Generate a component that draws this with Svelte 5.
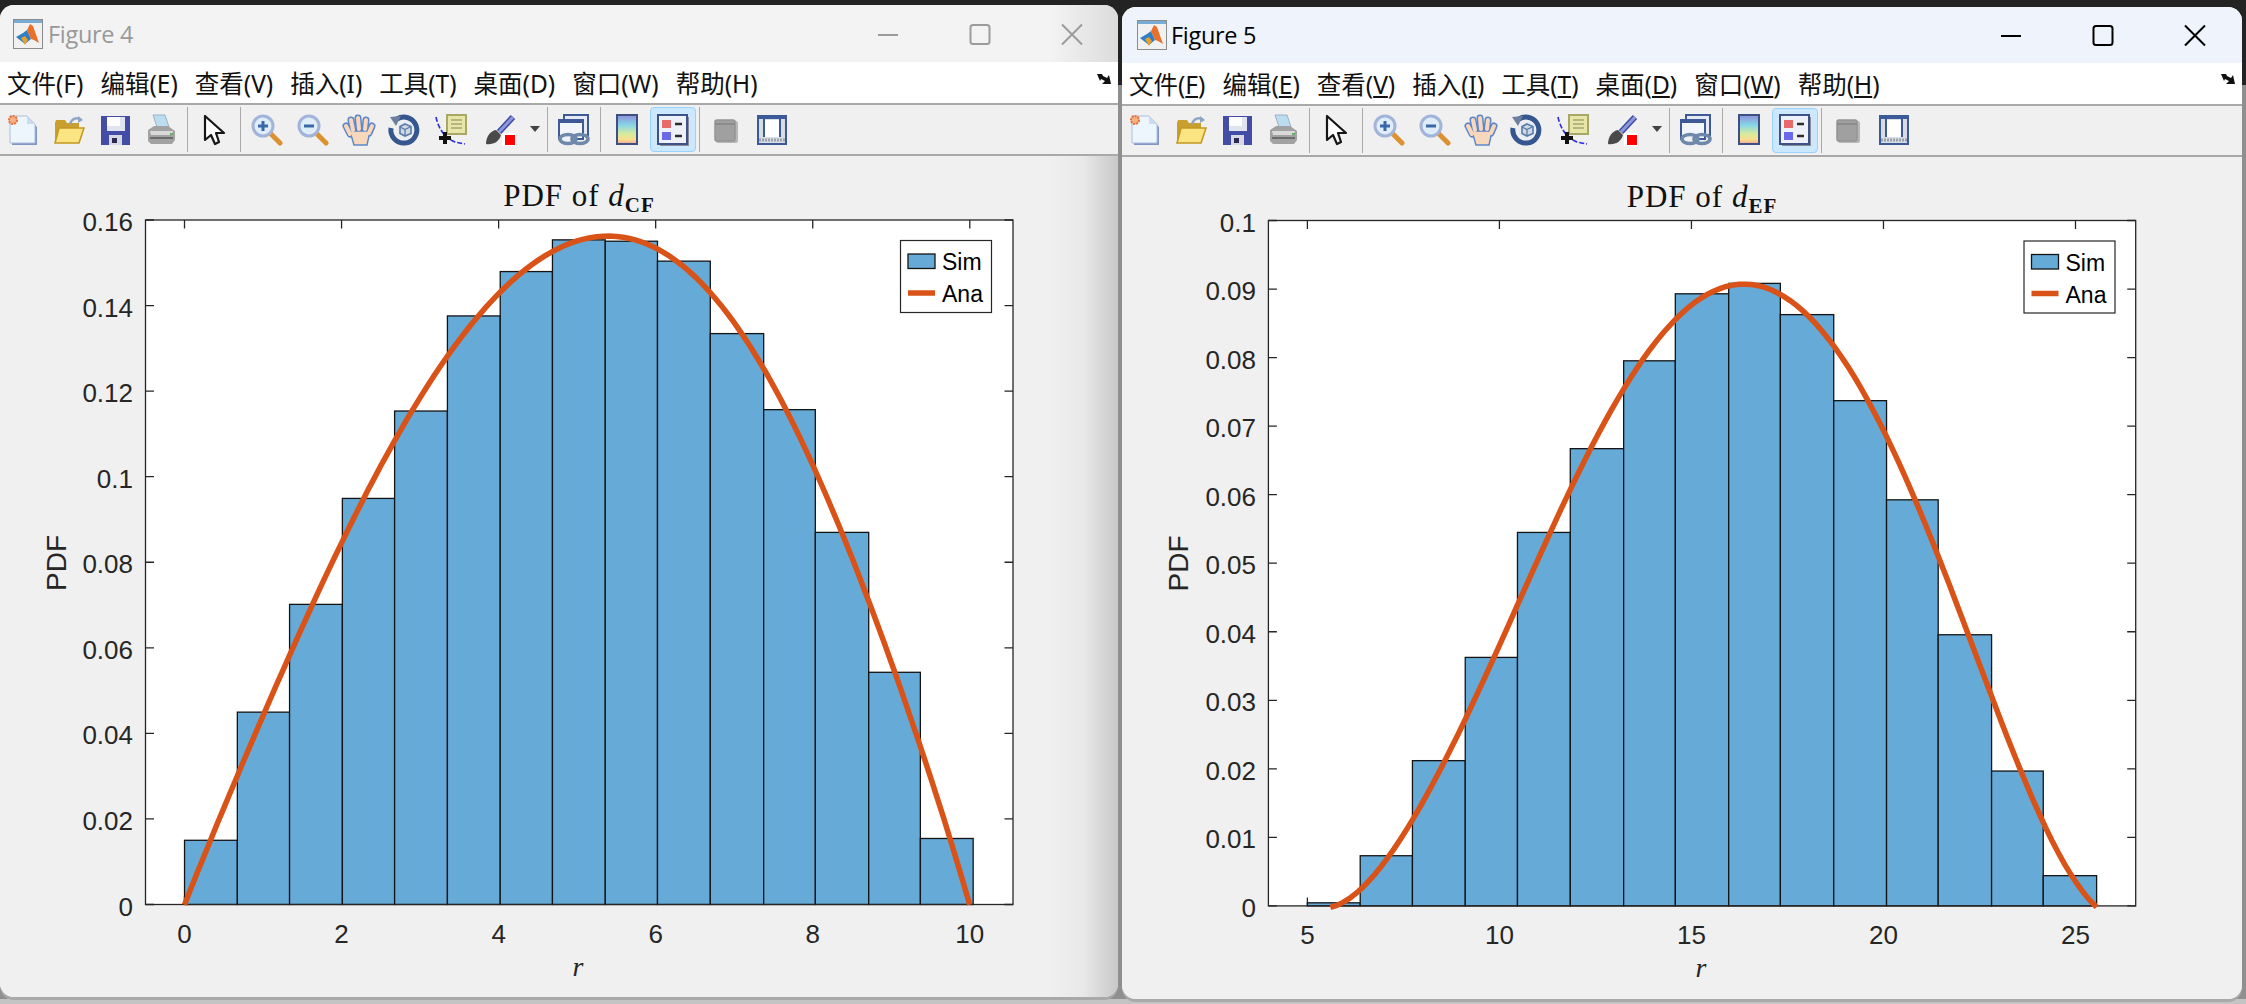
<script>
  const CURVE_A = [[95,1545],[140,1403],[187,1265],[233,1120],[278,990],[320,882],[370,745],[408,648],[461,515],[491,455],[553,335],[600,255],[645,190],[690,145],[736,105],[780,78],[830,68],[880,76],[919,95],[950,122],[1011,195],[1065,284],[1104,360],[1150,472],[1194,585],[1240,723],[1287,870],[1330,1032],[1377,1190],[1428,1399],[1463,1545]];
  const CURVE_B = [[140,1550],[165,1537],[192,1510],[230,1460],[283,1355],[340,1226],[375,1130],[428,998],[466,880],[522,722],[558,625],[595,537],[651,410],[690,325],[741,250],[790,200],[834,182],[866,176],[924,192],[965,235],[1017,310],[1075,431],[1109,510],[1160,650],[1199,770],[1250,948],[1292,1090],[1345,1249],[1382,1360],[1430,1480],[1455,1525],[1475,1547]];

  const SX = 1568 / 900, SY = 1568 / 710;

  // least-squares polynomial through the traced points, so the curve stays smooth
  function fit(points, degree) {
    const x0 = points[0][0], x1 = points[points.length - 1][0];
    const norm = (x) => (2 * (x - x0)) / (x1 - x0) - 1;
    const n = degree + 1;
    const m = Array.from({ length: n }, () => new Array(n + 1).fill(0));
    for (const [x, y] of points) {
      const t = norm(x);
      const pw = [1];
      for (let i = 1; i < n; i++) pw.push(pw[i - 1] * t);
      for (let i = 0; i < n; i++) {
        for (let j = 0; j < n; j++) m[i][j] += pw[i] * pw[j];
        m[i][n] += pw[i] * y;
      }
    }
    for (let i = 0; i < n; i++) {
      let best = i;
      for (let r = i + 1; r < n; r++) if (Math.abs(m[r][i]) > Math.abs(m[best][i])) best = r;
      [m[i], m[best]] = [m[best], m[i]];
      for (let r = 0; r < n; r++) {
        if (r === i) continue;
        const f = m[r][i] / m[i][i];
        for (let c = i; c <= n; c++) m[r][c] -= f * m[i][c];
      }
    }
    const coef = m.map((row, i) => row[n] / row[i]);
    return { x0, x1, at: (x) => coef.reduceRight((acc, c) => acc * norm(x) + c, 0) };
  }

  function curve(points, ox, degree, maxY) {
    const f = fit(points, degree);
    let d = '';
    for (let i = 0; i <= 120; i++) {
      const x = f.x0 + ((f.x1 - f.x0) * i) / 120;
      const y = Math.min(f.at(x), maxY);
      d += `${i ? 'L' : 'M'}${(ox + x / SX).toFixed(1)} ${(205 + y / SY).toFixed(1)}`;
    }
    return d;
  }

  function bars(edges, tops, ox, bottom) {
    return tops.map((t, i) => ({
      x: ox + edges[i] / SX,
      y: 205 + t / SY,
      w: (edges[i + 1] - edges[i]) / SX,
      h: bottom - (205 + t / SY)
    }));
  }

  function ticks(from, to, labels) {
    return labels.map((label, i) => ({ label, at: from + ((to - from) * i) / (labels.length - 1) }));
  }

  const plots = {
    a: {
      sub: 'CF',
      view: '0 156 1118 841',
      left: 145.5, right: 1013, top: 220, bottom: 904.5,
      cx: 579, labelX: 57, yLabelX: 133,
      xt: ticks(184.5, 969.8, ['0', '2', '4', '6', '8', '10']),
      yt: ticks(904.5, 220, ['0', '0.02', '0.04', '0.06', '0.08', '0.1', '0.12', '0.14', '0.16']),
      bars: bars([95,187,278,370,461,553,645,736,828,919,1011,1104,1194,1287,1377,1469],
                 [1403,1120,882,648,455,245,147,77,80,124,284,452,723,1032,1399], 130, 904.5),
      curve: curve(CURVE_A, 130, 8, 1548),
      legend: 900
    },
    b: {
      sub: 'EF',
      view: '1122 157 1120 841',
      left: 1268.4, right: 2135.7, top: 220, bottom: 905.4,
      cx: 1702, labelX: 1178.6, yLabelX: 1256,
      xt: ticks(1307.4, 2075.5, ['5', '10', '15', '20', '25']),
      yt: ticks(905.4, 220, ['0', '0.01', '0.02', '0.03', '0.04', '0.05', '0.06', '0.07', '0.08', '0.09', '0.1']),
      bars: bars([100,192,283,375,466,558,651,741,834,924,1017,1109,1199,1292,1382,1475],
                 [1540,1436,1226,998,722,537,343,195,172,241,431,650,948,1249,1480], 1250, 905.4),
      curve: curve(CURVE_B, 1250, 9, 1550),
      legend: 2023.5
    }
  };

  const menus = [
    ['文件', 'F'], ['编辑', 'E'], ['查看', 'V'], ['插入', 'I'],
    ['工具', 'T'], ['桌面', 'D'], ['窗口', 'W'], ['帮助', 'H']
  ];

  const tools = ['new', 'open', 'save', 'print', '|', 'cursor', '|', 'zoomin', 'zoomout', 'hand', 'rotate', 'tip', 'brush', 'v', '|', 'link', '|', 'bar', 'legend', '|', 'grey', 'frame'];
  const fingers = ['M7 20L3 12', 'M10 16L8 6', 'M16 15L15 4', 'M22 15L23 6', 'M26 19L29 12'];
</script>

{#snippet logo()}
  <svg class="logo" width="30" height="30" viewBox="0 0 30 30">
    <rect x=".5" y=".5" width="29" height="29" fill="#f1f1f1" stroke="#8b8b8b" />
    <rect x="1" y="1" width="28" height="3" fill="#79acd4" />
    <path d="M3 18l7-4 4-3 4 9-6 5z" fill="#2f7fc4" />
    <path d="M14 11l3-6 3 2 6 17-5-3-3-1z" fill="#e8702a" />
    <path d="M8 19l4-2 3 4-3 5z" fill="#e8a030" />
  </svg>
{/snippet}

{#snippet icon(name)}
  <svg class="ic" width="32" height="32" viewBox="0 0 32 32">
    {#if name === 'new'}
      <path d="M5 4h16l9 9v18H5z" fill="#8296c2" />
      <path d="M3 2h17l8 8v19H3z" fill="#eef6fd" stroke="#a9bede" />
      <path d="M20 2v8h8z" fill="#c9dcf0" />
      <circle cx="6" cy="6" r="4" fill="#f5b184" stroke="#e2703a" stroke-width="2" stroke-dasharray="2 1" />
    {:else if name === 'open'}
      <path d="M2 9l1-3h9l2 3h12v20H2z" fill="#c9a030" />
      <path d="M2 29L6 14h25l-5 15z" fill="#fbe582" stroke="#c4961f" stroke-width="1.5" />
      <path d="M17 10c2-6 7-7 11-4" fill="none" stroke="#8ea5c4" stroke-width="2.5" />
      <path d="M25 2l5 4-5 3z" fill="#8ea5c4" />
    {:else if name === 'save'}
      <rect x="2" y="2" width="29" height="29" fill="#444da6" />
      <rect x="8" y="3" width="18" height="14" fill="#dfe4ee" />
      <rect x="8" y="3" width="13" height="9" fill="#fdfdfd" />
      <rect x="10" y="21" width="13" height="10" fill="#d6d8e4" />
      <rect x="13" y="24" width="5" height="5" fill="#2a2a50" />
    {:else if name === 'print'}
      <path d="M8 1h12l4 12H12z" fill="#bcdcef" stroke="#9ab2c4" />
      <path d="M3 16l6-4h14l7 5v9l-3 4H6l-3-3z" fill="#a2a2a2" />
      <path d="M5 17h23l-1 4H6z" fill="#d9d9d9" />
      <path d="M5 24h23" stroke="#6c6c6c" stroke-width="2" />
      <rect x="25" y="19" width="3" height="2" fill="#62b262" />
    {:else if name === 'cursor'}
      <path d="M7 2v24l6-5 4 9 4-2-3-9h8z" fill="#fff" stroke="#161616" stroke-width="2.2" stroke-linejoin="round" />
    {:else if name === 'zoomin' || name === 'zoomout'}
      <path d="M20 20l9 9" stroke="#dc9232" stroke-width="5" stroke-linecap="round" />
      <circle cx="12" cy="12" r="10" fill="#dfedf8" stroke="#a3b4da" stroke-width="3" />
      <path d="M7 12h10" stroke="#3a67a8" stroke-width="3" />
      {#if name === 'zoomin'}<path d="M12 7v10" stroke="#3a67a8" stroke-width="3" />{/if}
    {:else if name === 'hand'}
      {#each fingers as f}
        <path d={f} stroke="#5e86ca" stroke-width="7" stroke-linecap="round" />
      {/each}
      <path d="M7 17h20l-3 14H11z" fill="#f8d8bc" stroke="#5e86ca" stroke-width="1.5" />
      {#each fingers as f}
        <path d={f} stroke="#f8d8bc" stroke-width="4" stroke-linecap="round" />
      {/each}
      <path d="M8 18h18l-3 12H12z" fill="#f8d8bc" />
    {:else if name === 'rotate'}
      <path d="M8 5a13 13 0 1 1-6 9" fill="none" stroke="#35568f" stroke-width="5" />
      <path d="M1 3l11-1-5 10z" fill="#6d7f9f" />
      <circle cx="16" cy="16" r="9" fill="#e8edf4" />
      <path d="M16 10l6 2.500v7l-6 2.500-5-2.500v-7z" fill="#cfd9e6" stroke="#5b7ba8" stroke-width="1.6" />
      <path d="M11 13l5 2.500 6-3M16 15.500v6" fill="none" stroke="#5b7ba8" stroke-width="1.3" />
    {:else if name === 'tip'}
      <path d="M1 3c2 10 8 21 19 25l10 2" fill="none" stroke="#2a2ae0" stroke-width="1.6" stroke-dasharray="5 2" />
      <rect x="12" y="1" width="19" height="19" fill="#e8e5a8" stroke="#a7a766" stroke-width="2" />
      <path d="M16 6h11M16 10h11M16 14h11" stroke="#a5a573" stroke-width="1.6" />
      <path d="M10 18v12M4 24h12" stroke="#111" stroke-width="4" />
    {:else if name === 'brush'}
      <path d="M29 3L15 18" stroke="#3e4ca0" stroke-width="6" />
      <path d="M29 3L15 18" stroke="#8f97dc" stroke-width="3" />
      <path d="M2 30c0-7 4-13 10-14l5 5c-2 7-8 10-15 9z" fill="#4a4a4a" />
      <rect x="18" y="19" width="14" height="13" fill="#fff" />
      <rect x="21" y="21" width="10" height="10" fill="#f00" />
    {:else if name === 'link'}
      <rect x="6" y="1" width="24" height="20" fill="#e4e9f3" stroke="#3d5a96" stroke-width="2" />
      <rect x="1" y="6" width="24" height="19" fill="#f2f5fa" stroke="#3d5a96" stroke-width="2" />
      <rect x="1" y="5" width="24" height="4" fill="#3d5a96" />
      <ellipse cx="10" cy="25" rx="8" ry="4.500" fill="#eef1f6" stroke="#6f89aa" stroke-width="3.500" />
      <ellipse cx="22" cy="25" rx="8" ry="4.500" fill="none" stroke="#6f89aa" stroke-width="3.500" />
    {:else if name === 'bar'}
      <defs>
        <linearGradient id="spectrum" x1="0" x2="0" y1="0" y2="1">
          <stop offset="0" stop-color="#8f8fdc" />
          <stop offset=".35" stop-color="#86d6e6" />
          <stop offset=".65" stop-color="#d8eb9e" />
          <stop offset=".85" stop-color="#f8dd8c" />
          <stop offset="1" stop-color="#f0a3a0" />
        </linearGradient>
      </defs>
      <rect x="7" y="2" width="20" height="29" fill="#8a8a98" />
      <rect x="6" y="1" width="20" height="29" fill="url(#spectrum)" stroke="#3e4f82" stroke-width="2" />
    {:else if name === 'legend'}
      <rect x="3" y="3" width="29" height="29" fill="#8a8a98" />
      <rect x="1" y="1" width="29" height="29" fill="#eef0fa" stroke="#3f5287" stroke-width="2" />
      <rect x="5" y="6" width="9" height="8" fill="#e86a6a" />
      <rect x="5" y="18" width="9" height="8" fill="#6a6ae6" />
      <path d="M18 10h7M18 22h7" stroke="#2c2c2c" stroke-width="2.4" />
    {:else if name === 'grey'}
      <rect x="6" y="7" width="22" height="22" rx="2" fill="#b8b8b8" />
      <rect x="5" y="6" width="20" height="21" rx="2" fill="#a0a0a0" stroke="#949494" stroke-width="1.5" />
      <path d="M5 10h20" stroke="#8b8b8b" stroke-width="2" />
    {:else if name === 'frame'}
      <rect x="1" y="1" width="30" height="30" fill="#3d5a98" />
      <rect x="3" y="5" width="26" height="24" fill="#d8dde4" />
      <rect x="8" y="6" width="16" height="17" fill="#fff" />
      <path d="M3 26h26" stroke="#9aa3ae" stroke-width="3" stroke-dasharray="2 1" />
      <path d="M8 5v18M24 5v18" stroke="#3d5a98" stroke-width="2" />
    {/if}
  </svg>
{/snippet}

{#snippet win(n, plot, active)}
  <section class="window" class:active>
    <header class="title">
      {@render logo()}
      <span class="name">Figure {n}</span>
      <div class="controls">
        <svg width="92" height="40" viewBox="0 0 92 40"><path d="M36 21h20" /></svg>
        <svg width="92" height="40" viewBox="0 0 92 40"><rect x="36.5" y="11" width="19" height="19" rx="2.5" /></svg>
        <svg width="92" height="40" viewBox="0 0 92 40"><path d="M36 10.500l20 20M56 10.500l-20 20" /></svg>
      </div>
    </header>
    <nav class="menu">
      {#each menus as [label, key]}
        <span class="item">{label}({#if active}<u>{key}</u>{:else}{key}{/if})</span>
      {/each}
      <svg class="dock" width="16" height="12" viewBox="0 0 16 12"><path d="M1 1h5l1 2 4 2 2-3 2 9H6l3-3-4-2-1 2z" fill="#111" /></svg>
    </nav>
    <div class="toolbar">
      {#each tools as t}
        {#if t === '|'}
          <span class="sep"></span>
        {:else if t === 'v'}
          <span class="drop"><i></i></span>
        {:else}
          <span class="tool" class:on={t === 'legend'} class:bleed={t === 'brush'}>{@render icon(t)}</span>
        {/if}
      {/each}
    </div>
    <div class="figure">
      <svg class="plot" viewBox={plot.view}>
        <text class="ttl" x={plot.cx} y="206" text-anchor="middle">PDF of <tspan class="it">d</tspan><tspan class="sub" dy="6">{plot.sub}</tspan></text>
        <rect x={plot.left} y={plot.top} width={plot.right - plot.left} height={plot.bottom - plot.top} fill="#fff" />
        {#each plot.xt as t}
          <path class="tick" d="M{t.at} {plot.bottom}v-8.500M{t.at} {plot.top}v8.500" />
          <text class="num" x={t.at} y={plot.bottom + 38.500} text-anchor="middle">{t.label}</text>
        {/each}
        {#each plot.yt as t}
          <path class="tick" d="M{plot.left} {t.at}h8.500M{plot.right} {t.at}h-8.500" />
          <text class="num" x={plot.yLabelX} y={t.at + 11} text-anchor="end">{t.label}</text>
        {/each}
        {#each plot.bars as b}
          <rect class="bin" x={b.x} y={b.y} width={b.w} height={b.h} />
        {/each}
        <rect class="box" x={plot.left} y={plot.top} width={plot.right - plot.left} height={plot.bottom - plot.top} />
        <path class="ana" d={plot.curve} />
        <text class="lab" transform="rotate(-90 {plot.labelX} 563)" x={plot.labelX} y="572" text-anchor="middle">PDF</text>
        <text class="r" x={plot.cx - 1} y="976" text-anchor="middle">r</text>
        <g transform="translate({plot.legend} 240)">
          <rect class="lg" x=".5" y=".5" width="91" height="72" />
          <rect class="bin" x="8" y="14" width="27" height="14.500" />
          <path class="ana" d="M8 53h27" />
          <text class="lgt" x="42" y="30">Sim</text>
          <text class="lgt" x="42" y="62">Ana</text>
        </g>
      </svg>
    </div>
  </section>
{/snippet}

<main class="desktop">
  {@render win(4, plots.a, false)}
  {@render win(5, plots.b, true)}
</main>

<style>
  :global(body) {
    margin: 0;
    overflow: hidden;
  }
  .desktop {
    width: 2246px;
    height: 1004px;
    display: flex;
    align-items: flex-start;
    gap: 4px;
    padding-top: 5px;
    box-sizing: border-box;
    overflow: hidden;
    background: linear-gradient(#232323 0 85px, #8f8f8f 85px 999px, #c4c4c4 999px);
  }
  .window {
    width: 1118px;
    height: 992px;
    flex: none;
    display: flex;
    flex-direction: column;
    border-radius: 14px;
    overflow: hidden;
    background: #f0f0f0;
    box-shadow: 0 3px 0 #a9a9a9;
    position: relative;
  }
  .window.active {
    width: 1120px;
    margin-top: 1.5px;
  }
  .title {
    height: 57px;
    flex: none;
    display: flex;
    align-items: center;
    background: linear-gradient(90deg, #f3f3f3 94%, #dcdcdc);
    color: #999;
  }
  .active .title {
    background: #eff3fb;
    color: #000;
    height: 56px;
  }
  .logo {
    margin: 0 5px 0 13px;
    flex: none;
  }
  .active .logo {
    margin-left: 15px;
    margin-right: 4px;
  }
  .name {
    font: 23.500px "Open Sans", sans-serif;
    letter-spacing: -.3px;
  }
  .controls {
    margin-left: auto;
    display: flex;
  }
  .active .controls {
    margin-right: 1px;
  }
  .controls svg {
    display: block;
    fill: none;
    stroke: #9b9b9b;
    stroke-width: 2;
  }
  .active .controls svg {
    stroke: #000;
  }
  .menu {
    height: 41px;
    flex: none;
    display: flex;
    align-items: center;
    gap: 17px;
    padding-left: 7px;
    background: #fff;
    border-bottom: 2px solid #a9a9a9;
    font: 24.500px "Noto Sans", "Noto Sans CJK SC", sans-serif;
    color: #111;
    white-space: nowrap;
  }
  .dock {
    margin-left: auto;
    margin-right: 6px;
    margin-top: -8px;
  }
  .toolbar {
    height: 49px;
    flex: none;
    display: flex;
    align-items: stretch;
    background: #f0f0f0;
    border-bottom: 2px solid #a9a9a9;
  }
  .tool {
    width: 46px;
    display: flex;
    align-items: center;
    justify-content: center;
    box-sizing: border-box;
    margin: 2px 0;
    border: 1px solid transparent;
    border-radius: 4px;
  }
  .tool.on {
    background: #cce8ff;
    border-color: #99d1ff;
  }
  .tool.bleed {
    padding-left: 6px;
  }
  .ic {
    display: block;
    overflow: visible;
    filter: blur(.4px);
  }
  .sep {
    width: 7px;
    position: relative;
  }
  .sep::before {
    content: "";
    position: absolute;
    left: 3px;
    top: 2px;
    bottom: 2px;
    width: 1px;
    background: #a9a9a9;
  }
  .drop {
    width: 24px;
    display: flex;
    align-items: center;
    justify-content: center;
  }
  .drop i {
    width: 0;
    height: 0;
    margin-left: 6px;
    margin-top: -2px;
    border: 5px solid transparent;
    border-top: 6px solid #444;
    border-bottom: 0;
  }
  .figure {
    flex: 1;
    min-height: 0;
    position: relative;
    background: #f0f0f0;
  }
  .window:not(.active) .figure::after {
    content: "";
    position: absolute;
    top: 0;
    bottom: 0;
    right: 0;
    width: 70px;
    background: linear-gradient(90deg, rgba(0, 0, 0, 0), rgba(0, 0, 0, .03) 50%, rgba(0, 0, 0, .17));
    pointer-events: none;
  }
  .plot {
    display: block;
    width: 100%;
    height: 100%;
  }
  .ttl {
    font: 31px "Liberation Serif", serif;
    letter-spacing: 1px;
    fill: #111;
  }
  .it {
    font-style: italic;
  }
  .sub {
    font-size: 21px;
    font-weight: 700;
  }
  .tick {
    fill: none;
    stroke: #262626;
    stroke-width: 1.3;
  }
  .num {
    font: 26px "Liberation Sans", sans-serif;
    fill: #262626;
  }
  .lab {
    font: 28px "Liberation Sans", sans-serif;
    fill: #262626;
  }
  .r {
    font: italic 28px "Liberation Serif", serif;
    fill: #262626;
  }
  .bin {
    fill: #66aad7;
    stroke: #141414;
    stroke-width: 1.3;
  }
  .box {
    fill: none;
    stroke: #262626;
    stroke-width: 1.3;
  }
  .ana {
    fill: none;
    stroke: #d95319;
    stroke-width: 5.500;
  }
  .lg {
    fill: #fff;
    stroke: #262626;
    stroke-width: 1.2;
  }
  .lgt {
    font: 23px "Liberation Sans", sans-serif;
    fill: #000;
  }
</style>
